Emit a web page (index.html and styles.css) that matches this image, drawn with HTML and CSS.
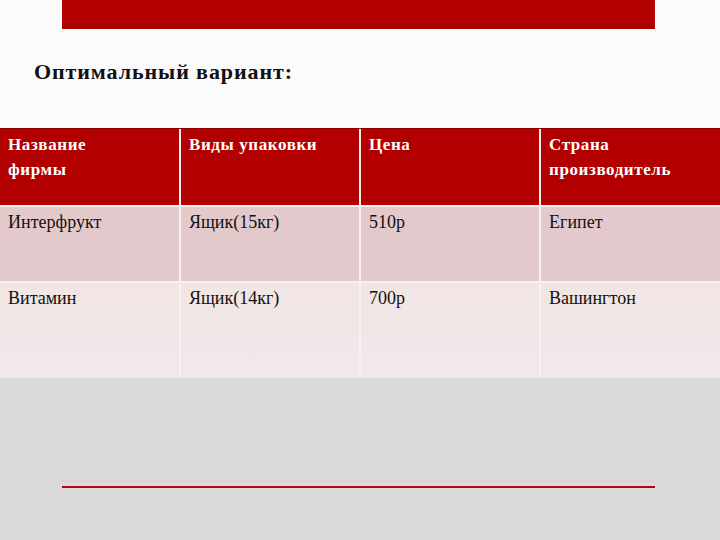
FILE: index.html
```html
<!DOCTYPE html>
<html lang="ru">
<head>
<meta charset="utf-8">
<title>Оптимальный вариант</title>
<link rel="stylesheet" href="styles.css">
</head>
<body>
<div class="slide">
  <div class="top-bar"></div>
  <h1 class="title">Оптимальный вариант:</h1>
  <div class="table">
    <div class="cell head">Название<br>фирмы</div>
    <div class="cell head">Виды упаковки</div>
    <div class="cell head">Цена</div>
    <div class="cell head">Страна<br>производитель</div>

    <div class="cell r1">Интерфрукт</div>
    <div class="cell r1">Ящик(15кг)</div>
    <div class="cell r1">510р</div>
    <div class="cell r1">Египет</div>

    <div class="cell r2">Витамин</div>
    <div class="cell r2">Ящик(14кг)</div>
    <div class="cell r2">700р</div>
    <div class="cell r2">Вашингтон</div>
  </div>
  <div class="bottom">
    <div class="rule"></div>
  </div>
</div>
</body>
</html>
```

FILE: styles.css
```css
html, body {
  margin: 0;
  padding: 0;
}
body {
  width: 720px;
  height: 540px;
  overflow: hidden;
  background: #fbfbfb;
  font-family: "Liberation Serif", "Times New Roman", serif;
}
.slide {
  display: flex;
  flex-direction: column;
  height: 540px;
}
.top-bar {
  margin: 0 65px 0 62px;
  height: 26px;
  background: #b30000;
  border-bottom: 3px solid #9e0000;
  border-right: 1px solid #c01010;
}
.title {
  margin: 31px 0 0 34px;
  font-size: 22px;
  line-height: 24px;
  font-weight: bold;
  letter-spacing: 0.9px;
  color: #111;
}
.table {
  margin-top: 44px;
  display: grid;
  grid-template-columns: 179px 178px 178px 179px;
  grid-template-rows: 76px 74px 95px;
  column-gap: 2px;
  row-gap: 2px;
  background: #f7f0f0;
  border-top: 1px solid #8c0000;
}
.cell {
  padding-left: 8px;
  font-size: 18px;
  line-height: 25px;
  color: #111;
}
.head {
  background: #b20000;
  color: #ffffff;
  font-weight: bold;
  font-size: 17px;
  padding-top: 3px;
  letter-spacing: 0.6px;
}
.r1 {
  background: #e3c9cb;
  padding-top: 3px;
}
.r2 {
  background: linear-gradient(#f1e6e4, #f2e7ea);
  padding-top: 3px;
}
.bottom {
  flex: 1;
  background: #dadada;
  padding-top: 108px;
}
.rule {
  margin: 0 65px 0 62px;
  height: 2px;
  background: #b8001c;
  box-shadow: 0 -6px 0 0 rgba(240, 190, 200, 0.5);
}
```
